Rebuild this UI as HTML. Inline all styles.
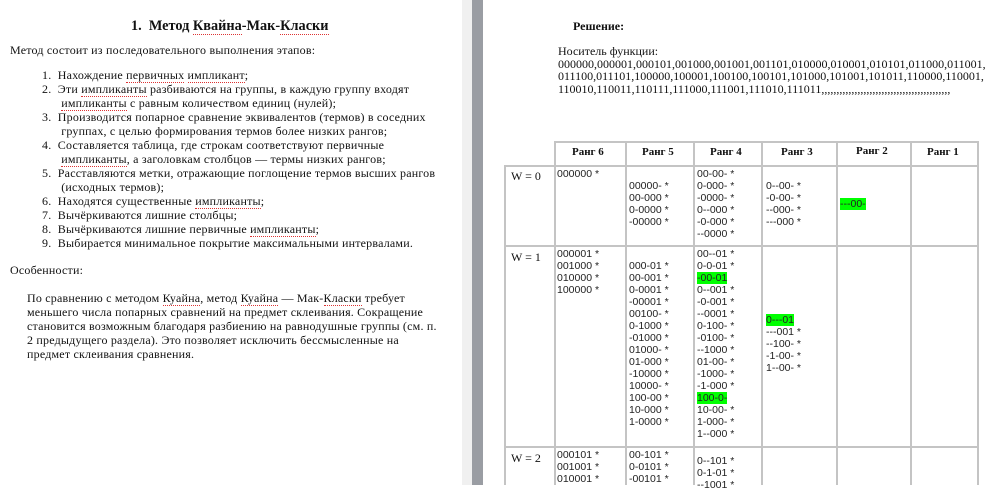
<!DOCTYPE html>
<html><head><meta charset="utf-8"><style>
*{margin:0;padding:0}
body{width:1000px;height:485px;overflow:hidden;background:#fff;position:relative;font-family:"Liberation Serif","DejaVu Serif",serif;color:#111}
.a{position:absolute;white-space:nowrap}
.t{font-size:12px;line-height:14px}
.l{letter-spacing:0.2px}
.bar{position:absolute;left:472px;top:0;width:11px;height:485px;background:#9a9da3}
.g{position:absolute;left:462px;top:0;width:10px;height:485px;background:#f0f0f0}
.m{font-family:"Liberation Sans",Arial,sans-serif;font-size:10.5px;line-height:12px;color:#222}
.hl{background:#0f0}
.h{position:absolute;background:#c4c4c4;height:2px}
.v{position:absolute;background:#c4c4c4;width:2px}
.b{font-weight:bold}
u{text-decoration:none;border-bottom:1px dotted #d33}
</style></head><body>
<div class="g"></div><div class="bar"></div>

<div class="a b" style="left:131px;top:18px;font-size:14.3px">1.&nbsp; Метод <u>Квайна</u>-Мак-<u>Класки</u></div>
<div class="a t l" style="left:10px;top:43px">Метод состоит из последовательного выполнения этапов:</div>
<div class="a t l" style="left:42px;top:68px;line-height:14px">
1.&nbsp; Нахождение <u>первичных</u> <u>импликант</u>;<br>
2.&nbsp; Эти <u>импликанты</u> разбиваются на группы, в каждую группу входят<br>
&nbsp;&nbsp;&nbsp;&nbsp;&nbsp; <u>импликанты</u> с равным количеством единиц (нулей);<br>
3.&nbsp; Производится попарное сравнение эквивалентов (термов) в соседних<br>
&nbsp;&nbsp;&nbsp;&nbsp;&nbsp; группах, с целью формирования термов более низких рангов;<br>
4.&nbsp; Составляется таблица, где строкам соответствуют первичные<br>
&nbsp;&nbsp;&nbsp;&nbsp;&nbsp; <u>импликанты</u>, а заголовкам столбцов — термы низких рангов;<br>
5.&nbsp; Расставляются метки, отражающие поглощение термов высших рангов<br>
&nbsp;&nbsp;&nbsp;&nbsp;&nbsp; (исходных термов);<br>
6.&nbsp; Находятся существенные <u>импликанты</u>;<br>
7.&nbsp; Вычёркиваются лишние столбцы;<br>
8.&nbsp; Вычёркиваются лишние первичные <u>импликанты</u>;<br>
9.&nbsp; Выбирается минимальное покрытие максимальными интервалами.</div>
<div class="a t l" style="left:10px;top:263px">Особенности:</div>
<div class="a t l" style="left:27px;top:291px">По сравнению с методом <u>Куайна</u>, метод <u>Куайна</u> — Мак-<u>Класки</u> требует<br>меньшего числа попарных сравнений на предмет склеивания. Сокращение<br>становится возможным благодаря разбиению на равнодушные группы (см. п.<br>2 предыдущего раздела). Это позволяет исключить бессмысленные на<br>предмет склеивания сравнения.</div>

<div class="a b t" style="left:573px;top:19px">Решение:</div>
<div class="a t" style="left:558px;top:45px;line-height:12.5px">Носитель функции:<br>000000,000001,000101,001000,001001,001101,010000,010001,010101,011000,011001,<br>011100,011101,100000,100001,100100,100101,101000,101001,101011,110000,110001,<br>110010,110011,110111,111000,111001,111010,111011,,,,,,,,,,,,,,,,,,,,,,,,,,,,,,,,,,,,,,,,,,,</div>

<div class="h" style="left:554px;top:141px;width:425px"></div>
<div class="h" style="left:504px;top:165px;width:475px"></div>
<div class="h" style="left:504px;top:245px;width:475px"></div>
<div class="h" style="left:504px;top:446px;width:475px"></div>
<div class="v" style="left:504px;top:165px;height:320px"></div>
<div class="v" style="left:554px;top:141px;height:344px"></div>
<div class="v" style="left:625px;top:141px;height:344px"></div>
<div class="v" style="left:693px;top:141px;height:344px"></div>
<div class="v" style="left:761px;top:141px;height:344px"></div>
<div class="v" style="left:836px;top:141px;height:344px"></div>
<div class="v" style="left:910px;top:141px;height:344px"></div>
<div class="v" style="left:977px;top:141px;height:344px"></div>

<div class="a b" style="left:572px;top:146px;font-size:11px">Ранг 6</div>
<div class="a b" style="left:642px;top:146px;font-size:11px">Ранг 5</div>
<div class="a b" style="left:710px;top:146px;font-size:11px">Ранг 4</div>
<div class="a b" style="left:781px;top:146px;font-size:11px">Ранг 3</div>
<div class="a b" style="left:856px;top:145px;font-size:11px">Ранг 2</div>
<div class="a b" style="left:927px;top:146px;font-size:11px">Ранг 1</div>

<div class="a" style="left:511px;top:169px;font-size:12px">W = 0</div>
<div class="a" style="left:511px;top:250px;font-size:12px">W = 1</div>
<div class="a" style="left:511px;top:451px;font-size:12px">W = 2</div>

<div class="a m" style="left:557px;top:168px">000000 *</div>
<div class="a m" style="left:629px;top:180px">00000- *<br>00-000 *<br>0-0000 *<br>-00000 *</div>
<div class="a m" style="left:697px;top:168px">00-00- *<br>0-000- *<br>-0000- *<br>0--000 *<br>-0-000 *<br>--0000 *</div>
<div class="a m" style="left:766px;top:180px">0--00- *<br>-0-00- *<br>--000- *<br>---000 *</div>
<div class="a m" style="left:840px;top:198px"><span class="hl">---00-</span></div>

<div class="a m" style="left:557px;top:248px">000001 *<br>001000 *<br>010000 *<br>100000 *</div>
<div class="a m" style="left:629px;top:260px">000-01 *<br>00-001 *<br>0-0001 *<br>-00001 *<br>00100- *<br>0-1000 *<br>-01000 *<br>01000- *<br>01-000 *<br>-10000 *<br>10000- *<br>100-00 *<br>10-000 *<br>1-0000 *</div>
<div class="a m" style="left:697px;top:248px">00--01 *<br>0-0-01 *<br><span class="hl">-00-01</span><br>0--001 *<br>-0-001 *<br>--0001 *<br>0-100- *<br>-0100- *<br>--1000 *<br>01-00- *<br>-1000- *<br>-1-000 *<br><span class="hl">100-0-</span><br>10-00- *<br>1-000- *<br>1--000 *</div>
<div class="a m" style="left:766px;top:314px"><span class="hl">0---01</span><br>---001 *<br>--100- *<br>-1-00- *<br>1--00- *</div>

<div class="a m" style="left:557px;top:449px">000101 *<br>001001 *<br>010001 *</div>
<div class="a m" style="left:629px;top:449px">00-101 *<br>0-0101 *<br>-00101 *</div>
<div class="a m" style="left:697px;top:455px">0--101 *<br>0-1-01 *<br>--1001 *</div>
</body></html>
